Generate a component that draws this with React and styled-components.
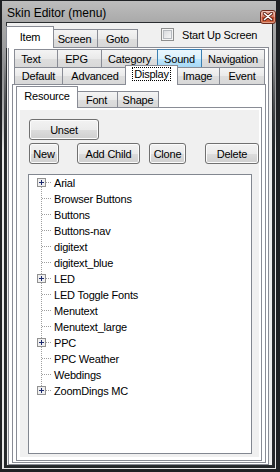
import React from 'react';
import styled, { createGlobalStyle } from 'styled-components';

const GlobalStyle = createGlobalStyle`
  html, body { margin: 0; padding: 0; }
  body {
    background: #2b2e31;
    font-family: "Liberation Sans", Arial, sans-serif;
    color: #000;
  }
  #root { width: 280px; height: 472px; }
`;

const Window = styled.div`
  box-sizing: border-box;
  width: 280px;
  height: 472px;
  display: flex;
  flex-direction: column;
  border: solid #1f2124;
  border-width: 1px 4px 3px 2px;
  background: linear-gradient(#bdbdbd 0, #a9a9a9 22px, #9a9b9d 50px, #4a4d50 140px, #2c2f32 100%);
`;

const TitleBar = styled.div`
  height: 19px;
  flex: none;
  display: flex;
  align-items: center;
  padding: 5px 0 0 5px;
  box-sizing: border-box;
  font-size: 12px;
`;

const Title = styled.span`
  flex: 1;
`;

const CloseButton = styled.div`
  position: relative;
  z-index: 2;
  box-sizing: border-box;
  width: 16px;
  height: 14px;
  margin: 7px 0 0 0;
  border: 1px solid #6d2a1c;
  border-radius: 3px;
  background: linear-gradient(#e9a99a 0%, #d57b63 45%, #c0472a 55%, #cf6a45 100%);
  box-shadow: inset 0 0 0 1px rgba(255, 255, 255, 0.35);
  display: flex;
  align-items: center;
  justify-content: center;
`;

const FrameLine = styled.div`
  flex: 1;
  min-height: 0;
  display: flex;
  flex-direction: column;
  border-style: solid;
  border-width: ${p => p.$bw};
  border-image: linear-gradient(${p => `transparent 0, transparent 40px, ${p.$c} 130px, ${p.$c} 100%`}) 1;
`;

const Client = styled.div`
  flex: 1;
  min-height: 0;
  display: flex;
  flex-direction: column;
  background: #f0f0f0;
  border: 1px solid #2a2d30;
  padding: 6px 3px 0 1px;
`;

const TabControl = styled.div`
  flex: 1;
  min-height: 0;
  display: flex;
  flex-direction: column;
`;

const TabStrip = styled.div`
  flex: none;
  display: flex;
  flex-direction: column;
  padding-left: ${p => p.$indent}px;
  position: relative;
  z-index: 1;
`;

const TabRow = styled.div`
  display: flex;
  align-items: flex-end;
  height: ${p => p.$h}px;
`;

const tabBg = p => {
  if (p.$active) return '#ffffff';
  if (p.$hot) return 'linear-gradient(#eaf6fd 0%, #d9f0fc 50%, #bee6fd 51%, #a7d9f5 100%)';
  return 'linear-gradient(#f4f4f4 0%, #eaeaea 50%, #dedede 51%, #d8d8d8 100%)';
};

const Tab = styled.div`
  box-sizing: border-box;
  flex: none;
  position: relative;
  width: ${p => p.$w + 1 + (p.$active ? 4 : 0)}px;
  height: ${p => (p.$active ? p.$h + p.$lift + 1 : p.$h)}px;
  margin: 0 ${p => (p.$active ? -3 : -1)}px ${p => (p.$active ? -1 : 0)}px ${p => (p.$active ? -2 : 0)}px;
  padding-bottom: ${p => (p.$active ? 1 + 2 * p.$shift - p.$lift : 0)}px;
  padding-right: ${p => p.$dx * 2}px;
  z-index: ${p => (p.$active ? 3 : p.$hot ? 2 : 1)};
  display: flex;
  align-items: center;
  justify-content: center;
  border: 1px solid ${p => (p.$hot ? '#3c7fb1' : '#898c95')};
  border-bottom: none;
  background: ${tabBg};
  font-size: 11px;
  letter-spacing: -0.2px;
  white-space: nowrap;
`;

const Focus = styled.span`
  outline: 1px dotted #000;
  outline-offset: 0;
  padding: 0 1px;
`;

const Panel = styled.div`
  flex: 1;
  min-height: 0;
  display: flex;
  flex-direction: column;
  border: 1px solid #898c95;
  background: #ffffff;
  padding: ${p => p.$pad};
`;

const Check = styled.div`
  display: flex;
  align-items: center;
  align-self: flex-start;
  margin: -1px 0 0 24px;
  font-size: 11px;
  letter-spacing: -0.2px;
  white-space: nowrap;
`;

const CheckBox = styled.span`
  box-sizing: border-box;
  width: 13px;
  height: 13px;
  margin-right: 8px;
  border: 1px solid #8e8f8f;
  background: linear-gradient(135deg, #cfd2d6 0%, #e8e9eb 50%, #fbfbfb 100%);
  box-shadow: inset 0 0 0 1px #f4f4f4, inset 0 0 0 2px #b6babf;
`;

const Page = styled.div`
  flex: 1;
  min-height: 0;
  display: flex;
  flex-direction: column;
  background: #f0f0f0;
  padding-top: 9px;
`;

const ButtonRow = styled.div`
  display: flex;
  margin-top: ${p => p.$mt}px;
`;

const Button = styled.button`
  box-sizing: border-box;
  flex: none;
  width: ${p => p.$w}px;
  height: 21px;
  margin: 0 0 0 ${p => p.$ml}px;
  padding: 0;
  border: 1px solid #707070;
  border-radius: 3px;
  background: linear-gradient(#f2f2f2 0%, #ebebeb 50%, #dddddd 51%, #cfcfcf 100%);
  box-shadow: inset 0 0 0 1px #fbfbfb;
  font-family: inherit;
  font-size: 11px;
  letter-spacing: -0.2px;
  color: #000;
`;

const Tree = styled.div`
  flex: 1;
  min-height: 0;
  width: 224px;
  box-sizing: border-box;
  margin: 10px 0 3px 8px;
  border: 1px solid #828790;
  background: #ffffff;
  padding-left: 3px;
`;

const TreeRow = styled.div`
  display: flex;
  align-items: center;
  height: 16px;
  font-size: 11px;
  letter-spacing: -0.2px;
  white-space: nowrap;
`;

const TreeLabel = styled.span`
  margin-left: 2px;
`;

function CloseGlyph() {
  return (
    <svg width="10" height="9" viewBox="0 0 10 9">
      <path d="M1.5 1.5 L8.5 7.5 M8.5 1.5 L1.5 7.5" stroke="#5a2015" strokeWidth="3.2" strokeLinecap="round" />
      <path d="M1.5 1.5 L8.5 7.5 M8.5 1.5 L1.5 7.5" stroke="#ffffff" strokeWidth="1.6" strokeLinecap="round" />
    </svg>
  );
}

function Connector({ first, last, expandable }) {
  return (
    <svg width="20" height="16" viewBox="0 0 20 16" shapeRendering="crispEdges">
      <line x1="9.5" y1={first ? 8 : 0} x2="9.5" y2={last ? 8 : 16} stroke="#a0a0a0" strokeDasharray="1 1" />
      <line x1={expandable ? 14 : 10} y1="7.5" x2="20" y2="7.5" stroke="#a0a0a0" strokeDasharray="1 1" />
      {expandable && (
        <g>
          <rect x="5.5" y="3.5" width="8" height="8" fill="#efefef" stroke="#919191" />
          <line x1="7" y1="7.5" x2="12" y2="7.5" stroke="#1c2a6e" />
          <line x1="9.5" y1="5" x2="9.5" y2="10" stroke="#1c2a6e" />
        </g>
      )}
    </svg>
  );
}

function TabSet({ rows, h, lift, shift, indent, extra }) {
  return (
    <TabStrip $indent={indent}>
      {rows.map((row, i) => (
        <TabRow key={i} $h={h[i]}>
          {row.map(t => (
            <Tab
              key={t.label}
              $w={t.w}
              $h={h[i]}
              $lift={lift}
              $shift={shift}
              $dx={t.dx || 0}
              $active={t.active}
              $hot={t.hot}
            >
              {t.focus ? <Focus>{t.label}</Focus> : t.label}
            </Tab>
          ))}
          {i === rows.length - 1 && extra}
        </TabRow>
      ))}
    </TabStrip>
  );
}

const mainTabs = [
  { label: 'Item', w: 43, active: true },
  { label: 'Screen', w: 46 },
  { label: 'Goto', w: 40 },
];

const itemTabs = [
  [
    { label: 'Text', w: 43, dx: 5 },
    { label: 'EPG', w: 44, dx: 3 },
    { label: 'Category', w: 56 },
    { label: 'Sound', w: 44, hot: true },
    { label: 'Navigation', w: 63 },
  ],
  [
    { label: 'Default', w: 48 },
    { label: 'Advanced', w: 65 },
    { label: 'Display', w: 48, active: true, focus: true },
    { label: 'Image', w: 44 },
    { label: 'Event', w: 45 },
  ],
];

const pageTabs = [
  { label: 'Resource', w: 57, active: true },
  { label: 'Font', w: 42 },
  { label: 'Shape', w: 41 },
];

const resources = [
  { name: 'Arial', sub: true },
  { name: 'Browser Buttons' },
  { name: 'Buttons' },
  { name: 'Buttons-nav' },
  { name: 'digitext' },
  { name: 'digitext_blue' },
  { name: 'LED', sub: true },
  { name: 'LED Toggle Fonts' },
  { name: 'Menutext' },
  { name: 'Menutext_large' },
  { name: 'PPC', sub: true },
  { name: 'PPC Weather' },
  { name: 'Webdings' },
  { name: 'ZoomDings MC', sub: true },
];

export default function App() {
  return (
    <>
      <GlobalStyle />
      <Window>
        <TitleBar>
          <Title>Skin Editor (menu)</Title>
          <CloseButton>
            <CloseGlyph />
          </CloseButton>
        </TitleBar>
        <FrameLine $bw="1px 1px 1px 2px" $c="#e6e6e6">
          <FrameLine $bw="1px 2px 2px 2px" $c="#24272a">
            <Client>
              <TabControl>
                <TabSet
                  rows={[mainTabs]}
                  h={[18]}
                  lift={3}
                  shift={2}
                  indent={0}
                  extra={
                    <Check>
                      <CheckBox />
                      Start Up Screen
                    </Check>
                  }
                />
                <Panel $pad="1px 2px 1px 3px">
                  <TabControl>
                    <TabSet rows={itemTabs} h={[18, 17]} lift={2} shift={2} indent={2} />
                    <Panel $pad="6px 3px 1px 3px">
                      <TabControl>
                        <TabSet rows={[pageTabs]} h={[16]} lift={5} shift={4} indent={2} />
                        <Panel $pad="2px 2px 3px 3px">
                          <Page>
                            <ButtonRow $mt={0}>
                              <Button $w={70} $ml={9}>Unset</Button>
                            </ButtonRow>
                            <ButtonRow $mt={3}>
                              <Button $w={30} $ml={9}>New</Button>
                              <Button $w={63} $ml={18}>Add Child</Button>
                              <Button $w={37} $ml={9}>Clone</Button>
                              <Button $w={54} $ml={19}>Delete</Button>
                            </ButtonRow>
                            <Tree>
                              {resources.map((r, i) => (
                                <TreeRow key={r.name}>
                                  <Connector
                                    first={i === 0}
                                    last={i === resources.length - 1}
                                    expandable={r.sub}
                                  />
                                  <TreeLabel>{r.name}</TreeLabel>
                                </TreeRow>
                              ))}
                            </Tree>
                          </Page>
                        </Panel>
                      </TabControl>
                    </Panel>
                  </TabControl>
                </Panel>
              </TabControl>
            </Client>
          </FrameLine>
        </FrameLine>
      </Window>
    </>
  );
}
